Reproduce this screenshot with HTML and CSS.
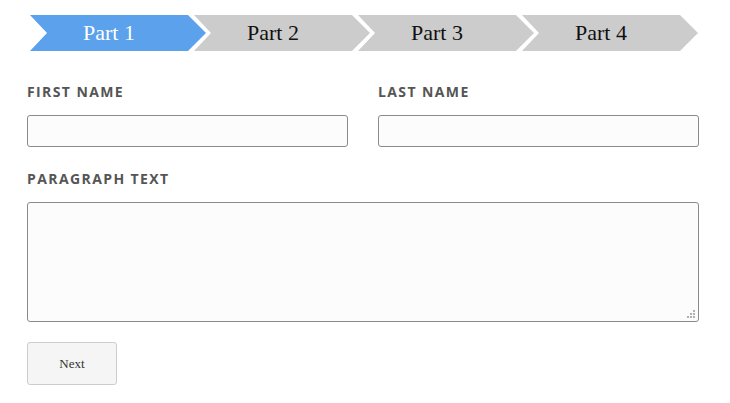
FILE: index.html
```html
<!DOCTYPE html>
<html>
<head>
<meta charset="utf-8">
<link rel="stylesheet" href="styles.css">
</head>
<body>
<div class="page">
  <div class="steps">
    <div class="step active"><span>Part 1</span></div>
    <div class="step"><span>Part 2</span></div>
    <div class="step"><span>Part 3</span></div>
    <div class="step"><span>Part 4</span></div>
  </div>
  <div class="row">
    <div class="field">
      <label class="label">First Name</label>
      <input class="input" type="text">
    </div>
    <div class="field">
      <label class="label">Last Name</label>
      <input class="input" type="text">
    </div>
  </div>
  <div class="field wide">
    <label class="label">Paragraph Text</label>
    <div class="textarea-wrap">
      <textarea class="textarea"></textarea>
      <svg class="grip" width="9" height="9" viewBox="0 0 9 9">
        <rect x="6" y="0" width="2" height="2" fill="#b0b0b0"/>
        <rect x="3" y="3" width="2" height="2" fill="#b0b0b0"/>
        <rect x="6" y="3" width="2" height="2" fill="#b0b0b0"/>
        <rect x="0" y="6" width="2" height="2" fill="#b0b0b0"/>
        <rect x="3" y="6" width="2" height="2" fill="#b0b0b0"/>
        <rect x="6" y="6" width="2" height="2" fill="#b0b0b0"/>
      </svg>
    </div>
  </div>
  <button class="next">Next</button>
</div>
</body>
</html>
```
FILE: styles.css
```css
html, body {
  margin: 0;
  padding: 0;
  background: #ffffff;
}
.page {
  padding: 15px 31px 0 27px;
  font-family: "Open Sans", sans-serif;
}
.steps {
  display: flex;
  width: 668px;
  margin-left: 3px;
  height: 36px;
}
.step {
  flex: 0 0 176px;
  height: 36px;
  margin-left: -12px;
  background: #cccccc;
  clip-path: polygon(0 0, 158px 0, 176px 18px, 158px 36px, 0 36px, 17px 18px);
  display: flex;
  align-items: center;
  justify-content: center;
  padding-right: 18px;
  box-sizing: border-box;
  font-family: "Liberation Serif", serif;
  font-size: 22px;
  color: #111111;
}
.step:first-child {
  margin-left: 0;
}
.step.active {
  background: #5ba1ec;
  color: #ffffff;
}
.row {
  display: flex;
  gap: 30px;
  margin-top: 32px;
}
.field {
  flex: 1;
  display: flex;
  flex-direction: column;
}
.field.wide {
  margin-top: 23px;
}
.label {
  font-family: "Open Sans", sans-serif;
  font-weight: 700;
  font-size: 14px;
  line-height: 18px;
  letter-spacing: 1.4px;
  text-transform: uppercase;
  color: #555555;
  margin-bottom: 14px;
}
.input {
  height: 32px;
  box-sizing: border-box;
  border: 1px solid #8a8a8a;
  border-radius: 3px;
  background: #fcfcfc;
  margin: 0;
  padding: 0 8px;
}
.textarea-wrap {
  position: relative;
  display: flex;
}
.textarea {
  flex: 1;
  display: block;
  height: 120px;
  box-sizing: border-box;
  border: 1px solid #8a8a8a;
  border-radius: 3px;
  background: #fcfcfc;
  margin: 0;
  padding: 6px 8px;
  resize: none;
}
.grip {
  position: absolute;
  right: 3px;
  bottom: 3px;
}
.next {
  display: block;
  margin-top: 20px;
  width: 90px;
  height: 43px;
  border: 1px solid #cccccc;
  border-radius: 3px;
  background: #f5f5f5;
  font-family: "Liberation Serif", serif;
  font-size: 13px;
  color: #333333;
  padding: 0;
}
```
